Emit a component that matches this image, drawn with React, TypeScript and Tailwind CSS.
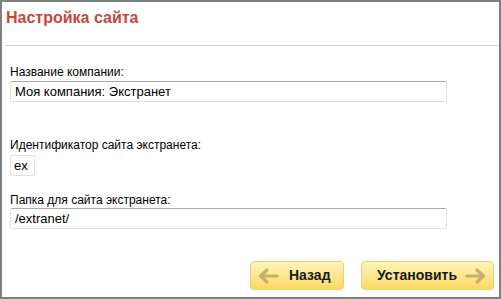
export default function App() {
  return (
    <div className="w-[501px] h-[299px] bg-white border-2 border-[#7f7f7f] flex flex-col" style={{ fontFamily: '"Liberation Sans", Arial, sans-serif' }}>
      {/* Header */}
      <div className="pl-[4px] pt-[6px] h-[43px]">
        <h1 className="text-[16px] font-bold text-[#c4473d] leading-[20px]">Настройка сайта</h1>
      </div>
      <div className="ml-[3px] h-px bg-[#d3d3d3]" />

      {/* Form */}
      <div className="flex flex-col pl-[8px] pt-[19px]">
        <label className="text-[12px] leading-[14px] text-black">Название компании:</label>
        <input
          readOnly
          value="Моя компания: Экстранет"
          className="mt-[2px] w-[437px] h-[21px] px-[4px] text-[13px] text-black border border-[#e2e2e2] border-t-[#a9a9a9] rounded-[2px] outline-none"
        />

        <label className="mt-[36px] text-[12px] leading-[14px] text-black">Идентификатор сайта экстранета:</label>
        <input
          readOnly
          value="ex"
          className="mt-[3px] w-[25px] h-[21px] px-[3px] text-[13px] text-black border border-[#e2e2e2] rounded-[2px] outline-none"
        />

        <label className="mt-[17px] text-[12px] leading-[14px] text-black">Папка для сайта экстранета:</label>
        <input
          readOnly
          value="/extranet/"
          className="mt-[1px] w-[437px] h-[21px] px-[4px] text-[13px] text-black border border-[#e2e2e2] border-t-[#a9a9a9] rounded-[2px] outline-none"
        />
      </div>

      {/* Buttons */}
      <div className="flex justify-end gap-[17px] pr-[5px] mt-auto mb-[7px]">
        <button className="w-[94px] h-[29px] flex items-center gap-[10px] pl-[6px] rounded-[4px] border border-[#e8cf7a] bg-gradient-to-b from-[#fff4b8] to-[#fbd961] text-[14px] font-bold text-[#1a1a1a]">
          <svg width="22" height="16" viewBox="0 0 22 16">
            <path d="M20 8H4M10 2L3.5 8L10 14" fill="none" stroke="#c4b26c" strokeWidth="3.2" strokeLinecap="round" strokeLinejoin="round" />
          </svg>
          Назад
        </button>
        <button className="w-[133px] h-[29px] flex items-center justify-end gap-[8px] pr-[6px] rounded-[4px] border border-[#e8cf7a] bg-gradient-to-b from-[#fff4b8] to-[#fbd961] text-[14px] font-bold text-[#1a1a1a]">
          Установить
          <svg width="22" height="16" viewBox="0 0 22 16">
            <path d="M2 8H18M12 2L18.5 8L12 14" fill="none" stroke="#c4b26c" strokeWidth="3.2" strokeLinecap="round" strokeLinejoin="round" />
          </svg>
        </button>
      </div>
    </div>
  );
}
